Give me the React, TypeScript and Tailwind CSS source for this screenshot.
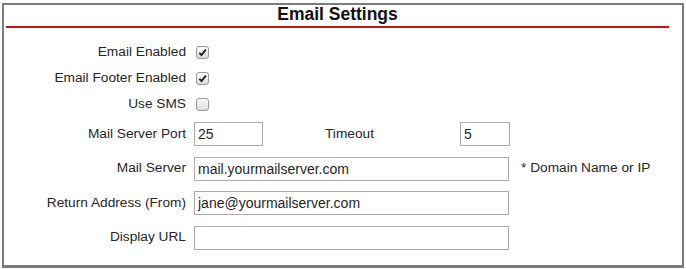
import React from "react";

function Check({ checked }: { checked?: boolean }) {
    return (
        <span className="ml-[2px] flex h-[13px] w-[13px] items-center justify-center rounded-[3px] border border-[#9a9a9a] bg-gradient-to-b from-[#fbfbfb] to-[#dcdcdc]">
            {checked && (
                <svg width="9" height="9" viewBox="0 0 9 9">
                    <path d="M1.3 4.8 L3.5 7 L7.8 1.6" fill="none" stroke="#222" strokeWidth="1.9" />
                </svg>
            )}
        </span>
    );
}

function Field({ value, className }: { value?: string; className: string }) {
    return (
        <input
            readOnly
            value={value ?? ""}
            className={`h-[24px] border border-[#ababab] bg-white pl-[3px] text-[14px] text-[#1f1f1f] outline-none ${className}`}
        />
    );
}

function Label({ children }: { children: React.ReactNode }) {
    return <div className="w-[182px] shrink-0 text-right">{children}</div>;
}

export default function App() {
    return (
        <div className="h-[269px] w-[686px] bg-white pl-[2px] pt-[3px] font-['Liberation_Sans',Arial,sans-serif] text-[13.7px] text-[#262626]">
            <div className="h-[265px] w-[682px] border-2 border-b-[3px] border-[#7b7b7b]">
                <div className="ml-[2px] w-[663px]">
                    <div className="h-[21px] text-center text-[17.5px] font-bold leading-[19px] text-[#111]">
                        Email Settings
                    </div>
                    <div className="h-[2px] bg-[#cc1414]" />
                </div>

                <div className="mt-[11px]">
                    <div className="flex h-[26px] items-center gap-[8px]">
                        <Label>Email Enabled</Label>
                        <Check checked />
                    </div>
                    <div className="flex h-[26px] items-center gap-[8px]">
                        <Label>Email Footer Enabled</Label>
                        <Check checked />
                    </div>
                    <div className="flex h-[26px] items-center gap-[8px]">
                        <Label>Use SMS</Label>
                        <Check />
                    </div>

                    <div className="flex h-[34px] items-center gap-[8px]">
                        <Label>Mail Server Port</Label>
                        <Field value="25" className="w-[69px]" />
                        <div className="ml-[54px] w-[127px]">Timeout</div>
                        <Field value="5" className="w-[50px]" />
                    </div>
                    <div className="flex h-[35px] items-center gap-[8px]">
                        <Label>Mail Server</Label>
                        <Field value="mail.yourmailserver.com" className="w-[315px]" />
                        <div className="ml-[4px]">* Domain Name or IP</div>
                    </div>
                    <div className="flex h-[34px] items-center gap-[8px]">
                        <Label>Return Address (From)</Label>
                        <Field value="jane@yourmailserver.com" className="w-[315px]" />
                    </div>
                    <div className="flex h-[35px] items-center gap-[8px]">
                        <Label>Display URL</Label>
                        <Field className="w-[315px]" />
                    </div>
                </div>
            </div>
        </div>
    );
}
